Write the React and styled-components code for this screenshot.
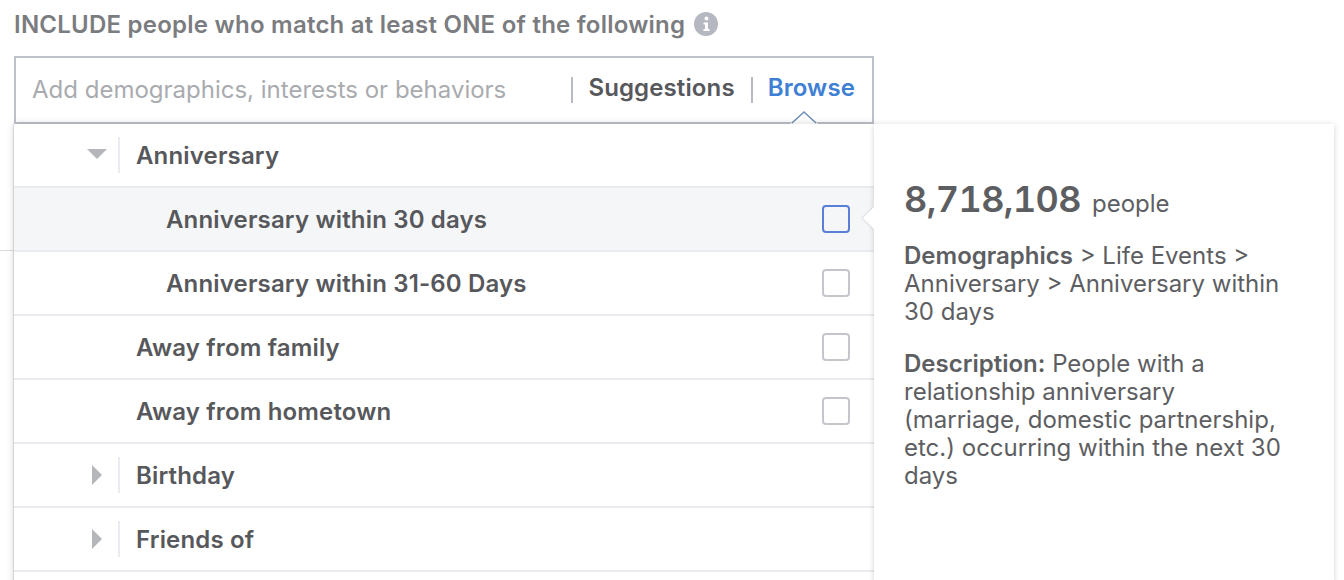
import React from 'react';
import styled, { createGlobalStyle } from 'styled-components';

const GlobalStyle = createGlobalStyle`
  html, body {
    margin: 0;
    padding: 0;
    background: #fff;
    overflow: hidden;
  }
  body {
    font-family: Inter, "Liberation Sans", sans-serif;
    color: #5d5e62;
  }
`;

const Page = styled.div`
  position: relative;
  width: 1344px;
  height: 580px;
  padding: 8px 0 0 14px;
  box-sizing: border-box;
  overflow: hidden;
`;

const Heading = styled.div`
  display: flex;
  align-items: center;
  gap: 10px;
  height: 32px;
  font-size: 24px;
  letter-spacing: 0.24px;
  font-weight: 600;
  color: #7b7c80;
`;

const InfoIcon = styled.svg`
  width: 24px;
  height: 24px;
  margin-left: -1px;
`;

const SearchBox = styled.div`
  position: relative;
  display: flex;
  align-items: center;
  box-sizing: border-box;
  width: 860px;
  height: 68px;
  margin-top: 16px;
  padding: 0 17px 0 16px;
  border: 2px solid #bdc1c9;
  background: #fff;
`;

const Placeholder = styled.div`
  flex: 1;
  font-size: 24px;
  line-height: 28px;
  margin-top: -1px;
  color: #a9abaf;
`;

const Tab = styled.div`
  height: 26px;
  padding-left: 15px;
  margin-left: 16px;
  border-left: 2px solid #b8bbc1;
  font-size: 24px;
  line-height: 22px;
  letter-spacing: 0.12px;
  font-weight: 600;
  color: ${(props) => (props.$active ? '#4080d4' : '#57585c')};
`;

const Caret = styled.svg`
  position: absolute;
  right: 54px;
  bottom: -2px;
  width: 28px;
  height: 14px;
`;

const Columns = styled.div`
  display: flex;
  align-items: flex-start;
`;

const List = styled.div`
  position: relative;
  width: 860px;
  box-shadow: 0 0 8px rgba(0, 0, 0, 0.16), -1px 0 0 #e2e3e5;
  background: #fff;
`;

const Row = styled.div`
  display: flex;
  align-items: center;
  box-sizing: border-box;
  height: 64px;
  padding-left: ${(props) => props.$indent}px;
  padding-right: 24px;
  border-bottom: 2px solid #e9ebee;
  background: ${(props) => (props.$selected ? '#f5f6f7' : '#fff')};
  font-size: 24px;
  letter-spacing: 0.16px;
  font-weight: 600;
  color: #57585c;
`;

const Toggle = styled.div`
  display: flex;
  align-items: center;
  box-sizing: border-box;
  width: 38px;
  height: 36px;
  margin-left: 68px;
  margin-right: 16px;
  padding-left: 5px;
  border-right: 2px solid #e9ebee;
`;

const RowLabel = styled.div`
  flex: 1;
`;

const Check = styled.div`
  box-sizing: border-box;
  width: 28px;
  height: 28px;
  border: 2px solid ${(props) => (props.$focused ? '#5b7fd6' : '#c4c6cb')};
  border-radius: 4px;
  background: ${(props) => (props.$focused ? '#f5f6f7' : '#fff')};
`;

const Detail = styled.div`
  position: relative;
  box-sizing: border-box;
  width: 460px;
  height: 460px;
  padding: 53px 39px 0 30px;
  background: #fff;
  box-shadow: 0 1px 6px rgba(0, 0, 0, 0.18);
  font-size: 24px;
  line-height: 28px;
  color: #5d5e62;
`;

const Pointer = styled.div`
  position: absolute;
  left: -10px;
  top: 84px;
  width: 20px;
  height: 20px;
  background: #fff;
  transform: rotate(45deg) scale(0.8);
  box-shadow: -1px 1px 2px rgba(0, 0, 0, 0.12);
`;

const Count = styled.div`
  display: flex;
  align-items: baseline;
  gap: 11px;
  line-height: 44px;
  font-size: 24px;
`;

const CountNumber = styled.span`
  font-size: 36px;
  font-weight: 600;
  letter-spacing: -0.6px;
  font-variant-numeric: tabular-nums;
`;

const Para = styled.p`
  margin: ${(props) => props.$gap}px 0 0;
`;

const Strong = styled.span`
  font-weight: 600;
`;

const Rule = styled.div`
  position: absolute;
  left: 0;
  top: 250px;
  width: 14px;
  height: 1px;
  background: #d9dadc;
`;

const Arrow = ({ open }) => (
  <svg width="20" height="20" viewBox="0 0 20 20">
    {open ? <path d="M0 4h20L10 14z" fill="#b4b6ba" /> : <path d="M5 0l10 10L5 20z" fill="#b4b6ba" />}
  </svg>
);

const rows = [
  { label: 'Anniversary', arrow: 'open' },
  { label: 'Anniversary within 30 days', indent: 152, check: true, selected: true },
  { label: 'Anniversary within 31-60 Days', indent: 152, check: true },
  { label: 'Away from family', indent: 122, check: true },
  { label: 'Away from hometown', indent: 122, check: true },
  { label: 'Birthday', arrow: 'closed' },
  { label: 'Friends of', arrow: 'closed' },
];

export default function App() {
  return (
    <Page>
      <GlobalStyle />
      <Rule />
      <Heading>
        INCLUDE people who match at least ONE of the following
        <InfoIcon viewBox="0 0 24 24">
          <circle cx="12" cy="12" r="12" fill="#b5b8c0" />
          <circle cx="12.5" cy="6.5" r="2" fill="#fff" />
          <path d="M9.5 10.5h4.5v6.5h1.5v2h-6v-2h1.5v-4.5h-1.5z" fill="#fff" />
        </InfoIcon>
      </Heading>
      <SearchBox>
        <Placeholder>Add demographics, interests or behaviors</Placeholder>
        <Tab>Suggestions</Tab>
        <Tab $active>Browse</Tab>
        <Caret viewBox="0 0 28 14">
          <path d="M0 14L14 1l14 13z" fill="#fff" />
          <path d="M2 13L14 2l12 11" fill="none" stroke="#6f8fb8" strokeWidth="1.5" />
        </Caret>
      </SearchBox>
      <Columns>
        <List>
          {rows.map((row) => (
            <Row key={row.label} $indent={row.indent || 0} $selected={row.selected}>
              {row.arrow && (
                <Toggle>
                  <Arrow open={row.arrow === 'open'} />
                </Toggle>
              )}
              <RowLabel>{row.label}</RowLabel>
              {row.check && <Check $focused={row.selected} />}
            </Row>
          ))}
          <Row $indent={0} />
        </List>
        <Detail>
          <Pointer />
          <Count>
            <CountNumber>8,718,108</CountNumber> people
          </Count>
          <Para $gap={16}>
            <Strong>Demographics</Strong> &gt; Life Events &gt; Anniversary &gt; Anniversary within 30 days
          </Para>
          <Para $gap={24}>
            <Strong>Description:</Strong> People with a relationship anniversary (marriage, domestic partnership, etc.) occurring within the next 30 days
          </Para>
        </Detail>
      </Columns>
    </Page>
  );
}
